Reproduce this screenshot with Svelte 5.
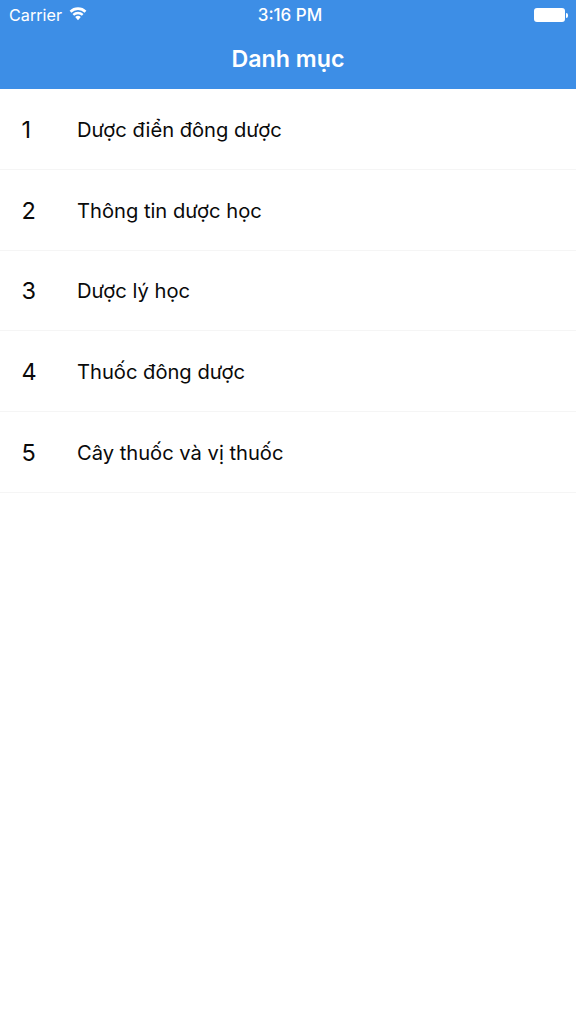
<script>
	const items = ['Dược điển đông dược', 'Thông tin dược học', 'Dược lý học', 'Thuốc đông dược', 'Cây thuốc và vị thuốc'];
</script>

<div class="screen">
	<header>
		<div class="status">
			<div class="left">
				<span>Carrier</span>
				<svg width="18" height="14" viewBox="0 0 18 13"><path d="M9 12.8 L6.2 9.5 A4.2 4.2 0 0 1 11.8 9.5 Z M5.1 8.3 L3.5 6.4 A8 8 0 0 1 14.5 6.4 L12.9 8.3 A5.6 5.6 0 0 0 5.1 8.3 Z M2.4 5.2 L0.6 3.3 A12 12 0 0 1 17.4 3.3 L15.6 5.2 A9.6 9.6 0 0 0 2.4 5.2 Z" fill="#fff"/></svg>
			</div>
			<span class="time">3:16 PM</span>
			<div class="battery"><div class="cell"></div><div class="tip"></div></div>
		</div>
		<div class="title">Danh mục</div>
	</header>
	<ul>
		{#each items as item, i}
			<li><span class="num">{i + 1}</span><span class="name">{item}</span></li>
		{/each}
	</ul>
</div>

<style>
	:global(body) {
		background: #fff;
	}
	.screen {
		font-family: Inter, "Liberation Sans", sans-serif;
		width: 576px;
		height: 1024px;
		overflow: hidden;
		background: #fff;
	}
	header {
		background: #3d8ee6;
		color: #fff;
		height: 89px;
	}
	.status {
		height: 30px;
		display: grid;
		grid-template-columns: 1fr auto 1fr;
		align-items: center;
		padding: 0 8px 0 9px;
		font-size: 16.2px;
	}
	.left {
		display: flex;
		align-items: center;
		gap: 7px;
	}
	.left svg {
		margin-top: -3px;
	}
	.time {
		font-size: 17px;
		font-weight: 500;
		margin-left: 3px;
	}
	.battery {
		justify-self: end;
		display: flex;
		align-items: center;
		gap: 1px;
	}
	.cell {
		width: 31px;
		height: 14px;
		background: #fff;
		border-radius: 3px;
		box-sizing: border-box;
	}
	.tip {
		width: 2px;
		height: 5px;
		background: #fff;
		border-radius: 0 2px 2px 0;
	}
	.title {
		text-align: center;
		font-size: 23.2px;
		font-weight: 600;
		line-height: 59px;
	}
	ul {
		list-style: none;
		margin: 0;
		padding: 0;
	}
	li {
		height: 80.75px;
		box-sizing: border-box;
		border-bottom: 1px solid #f5f5f5;
		display: flex;
		align-items: center;
		color: #0a0a0a;
		padding-left: 21.5px;
		padding-top: 1px;
	}
	.num {
		width: 55.5px;
		font-size: 23.5px;
		font-weight: 400;
	}
	.name {
		font-size: 20.15px;
	}
</style>
